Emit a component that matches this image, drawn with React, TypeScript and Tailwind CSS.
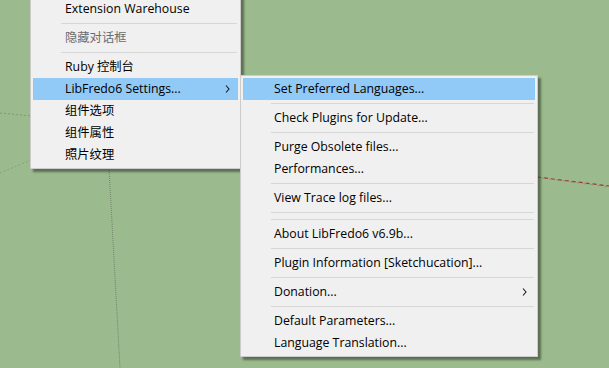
type Entry = { label: string; sep?: false; active?: boolean; disabled?: boolean; sub?: boolean } | { sep: true };

const leftMenu: Entry[] = [
  { label: "Extension Warehouse" },
  { sep: true },
  { label: "隐藏对话框", disabled: true },
  { sep: true },
  { label: "Ruby 控制台" },
  { label: "LibFredo6 Settings...", active: true, sub: true },
  { label: "组件选项" },
  { label: "组件属性" },
  { label: "照片纹理" },
];

const subMenu: Entry[] = [
  { label: "Set Preferred Languages...", active: true },
  { sep: true },
  { label: "Check Plugins for Update..." },
  { sep: true },
  { label: "Purge Obsolete files..." },
  { label: "Performances..." },
  { sep: true },
  { label: "View Trace log files..." },
  { sep: true },
  { sep: true },
  { label: "About LibFredo6 v6.9b..." },
  { sep: true },
  { label: "Plugin Information [Sketchucation]..." },
  { sep: true },
  { label: "Donation...", sub: true },
  { sep: true },
  { label: "Default Parameters..." },
  { label: "Language Translation..." },
];

function Chevron() {
  return (
    <svg width="5" height="8" viewBox="0 0 5 8" className="absolute right-[8px] top-[7px]">
      <path d="M1 0.5 L4 4 L1 7.5" fill="none" stroke="#1a1a1a" strokeWidth="1.1" />
    </svg>
  );
}

function Menu({ items, indent }: { items: Entry[]; indent: string }) {
  return (
    <div className="border border-[#cccccc] bg-[#f0f0f0] p-[2px] shadow-[3px_3px_2px_rgba(40,50,35,0.55)]">
      {items.map((item, i) =>
        item.sep ? (
          <div key={i} className="flex h-[7px] items-center pl-[28px] pr-[1px]">
            <div className="h-px w-full bg-[#d7d7d7]" />
          </div>
        ) : (
          <div
            key={i}
            className={`relative flex h-[22px] items-center whitespace-nowrap ${indent} ${
              item.active ? "bg-[#91c9f7]" : ""
            } ${item.disabled ? "text-[#6d6d6d]" : "text-[#000000]"}`}
          >
            {item.label}
            {item.sub ? <Chevron /> : null}
          </div>
        )
      )}
    </div>
  );
}

export default function App() {
  return (
    <div
      className="relative h-[368px] w-[609px] overflow-hidden bg-[#9bbb8e] text-[12.3px]"
      style={{ fontFamily: '"Open Sans", "Noto Sans CJK SC", sans-serif' }}
    >
      <svg width="609" height="368" className="absolute inset-0">
        <line x1="0" y1="113" x2="31" y2="116" stroke="#7f9a76" strokeWidth="1" strokeDasharray="2 2" />
        <line x1="0" y1="173" x2="31" y2="160" stroke="#84a27a" strokeWidth="1" strokeDasharray="2 2" />
        <line x1="109" y1="168" x2="120" y2="368" stroke="#6f8567" strokeWidth="1" strokeDasharray="1 1" />
        <line x1="537" y1="177" x2="609" y2="186" stroke="#a03c22" strokeWidth="1.2" strokeDasharray="4 3" />
        <line x1="539" y1="177.5" x2="609" y2="187" stroke="#9a8a7c" strokeWidth="1" strokeDasharray="3 4" strokeDashoffset="4" />
      </svg>

      <div className="absolute left-[30px] top-[-5px] w-[211px]">
        <Menu items={leftMenu} indent="pl-[32px]" />
      </div>

      <div className="absolute left-[240px] top-[75px] w-[298px]">
        <Menu items={subMenu} indent="pl-[31px]" />
      </div>
    </div>
  );
}
